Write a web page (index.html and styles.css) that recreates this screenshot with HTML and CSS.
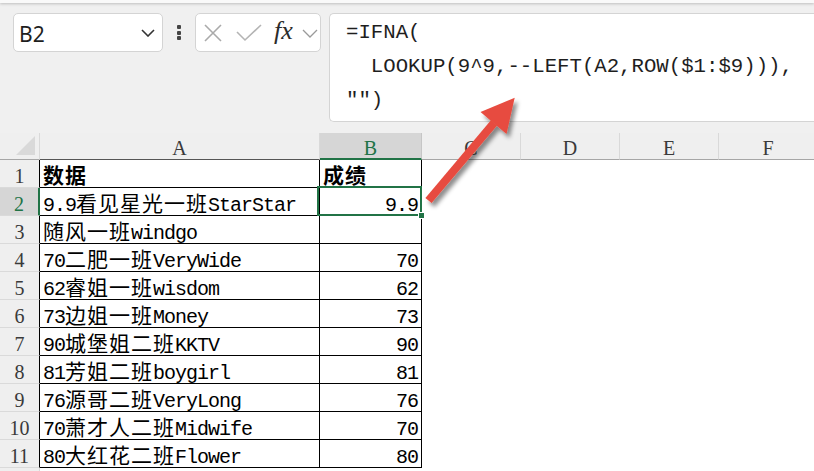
FILE: index.html
```html
<!DOCTYPE html>
<html lang="zh-CN">
<head>
<meta charset="utf-8">
<title>IFNA LOOKUP</title>
<link rel="stylesheet" href="styles.css">
</head>
<body>
<div class="ribbon"></div>
<div class="fbar">
  <div class="namebox">
    <span class="ref">B2</span>
    <svg class="nb-chev" width="14" height="8" viewBox="0 0 14 8"><path d="M1 1 L7 7 L13 1" fill="none" stroke="#333" stroke-width="1.6"/></svg>
  </div>
  <div class="dots"><i></i><i></i><i></i></div>
  <div class="fxbox">
    <svg class="ic-x" width="18" height="18" viewBox="0 0 18 18"><path d="M1 1 L17 17 M17 1 L1 17" fill="none" stroke="#aaaaaa" stroke-width="1.6"/></svg>
    <svg class="ic-ok" width="26" height="18" viewBox="0 0 26 18"><path d="M1 8 L9 16 L25 1" fill="none" stroke="#b4b4b4" stroke-width="1.6"/></svg>
    <span class="fx">fx</span>
    <svg class="fx-chev" width="16" height="9" viewBox="0 0 16 9"><path d="M1 1 L8 8 L15 1" fill="none" stroke="#9a9a9a" stroke-width="1.3"/></svg>
  </div>
  <div class="formula">=IFNA(
  LOOKUP(9^9,--LEFT(A2,ROW($1:$9))),
"")</div>
</div>

<div class="sheet">
  <div class="corner"><span class="tri"></span></div>
  <div class="ch hA">A</div>
  <div class="ch sel">B</div>
  <div class="ch">C</div>
  <div class="ch">D</div>
  <div class="ch">E</div>
  <div class="ch">F</div>

  <div class="rh">1</div>
  <div class="c hd">数据</div>
  <div class="c hd">成绩</div>
  <div class="e"></div><div class="e"></div><div class="e"></div><div class="e"></div>

  <div class="rh rsel">2</div>
  <div class="c"><span class="l">9.9</span>看见星光一班<span class="l">StarStar</span></div>
  <div class="c n active"><span class="l">9.9</span><span class="selbox"></span><span class="handle"></span></div>
  <div class="e"></div><div class="e"></div><div class="e"></div><div class="e"></div>

  <div class="rh">3</div>
  <div class="c">随风一班<span class="l">windgo</span></div>
  <div class="c n"></div>
  <div class="e"></div><div class="e"></div><div class="e"></div><div class="e"></div>

  <div class="rh">4</div>
  <div class="c"><span class="l">70</span>二肥一班<span class="l">VeryWide</span></div>
  <div class="c n"><span class="l">70</span></div>
  <div class="e"></div><div class="e"></div><div class="e"></div><div class="e"></div>

  <div class="rh">5</div>
  <div class="c"><span class="l">62</span>睿姐一班<span class="l">wisdom</span></div>
  <div class="c n"><span class="l">62</span></div>
  <div class="e"></div><div class="e"></div><div class="e"></div><div class="e"></div>

  <div class="rh">6</div>
  <div class="c"><span class="l">73</span>边姐一班<span class="l">Money</span></div>
  <div class="c n"><span class="l">73</span></div>
  <div class="e"></div><div class="e"></div><div class="e"></div><div class="e"></div>

  <div class="rh">7</div>
  <div class="c"><span class="l">90</span>城堡姐二班<span class="l">KKTV</span></div>
  <div class="c n"><span class="l">90</span></div>
  <div class="e"></div><div class="e"></div><div class="e"></div><div class="e"></div>

  <div class="rh">8</div>
  <div class="c"><span class="l">81</span>芳姐二班<span class="l">boygirl</span></div>
  <div class="c n"><span class="l">81</span></div>
  <div class="e"></div><div class="e"></div><div class="e"></div><div class="e"></div>

  <div class="rh">9</div>
  <div class="c"><span class="l">76</span>源哥二班<span class="l">VeryLong</span></div>
  <div class="c n"><span class="l">76</span></div>
  <div class="e"></div><div class="e"></div><div class="e"></div><div class="e"></div>

  <div class="rh">10</div>
  <div class="c"><span class="l">70</span>萧才人二班<span class="l">Midwife</span></div>
  <div class="c n"><span class="l">70</span></div>
  <div class="e"></div><div class="e"></div><div class="e"></div><div class="e"></div>

  <div class="rh">11</div>
  <div class="c"><span class="l">80</span>大红花二班<span class="l">Flower</span></div>
  <div class="c n"><span class="l">80</span></div>
  <div class="e"></div><div class="e"></div><div class="e"></div><div class="e"></div>

  <div class="rh rlast"></div>
  <div class="e"></div><div class="e"></div><div class="e"></div><div class="e"></div><div class="e"></div><div class="e"></div>
</div>

<svg class="arrow" width="140" height="140" viewBox="0 0 140 140">
  <defs>
    <filter id="sh" x="-30%" y="-30%" width="160%" height="160%">
      <feDropShadow dx="3" dy="4" stdDeviation="2.2" flood-color="#000" flood-opacity="0.45"/>
    </filter>
  </defs>
  <g filter="url(#sh)" fill="#e74c3f">
    <polygon points="15.4,112.9 21.6,118 87.1,40.4 80.9,35.2"/>
    <polygon points="70.5,27.1 104.7,12.7 96.5,48.9"/>
  </g>
</svg>
</body>
</html>
```

FILE: styles.css
```css
* { box-sizing: border-box; }

html, body {
  margin: 0;
  padding: 0;
  width: 814px;
  height: 471px;
  overflow: hidden;
}

body {
  background: #f0f0f0;
  font-family: "Noto Sans CJK SC", sans-serif;
  color: #000;
  position: relative;
}

.ribbon {
  height: 3px;
  background: #f9f9f9;
  box-shadow: 0 1px 3px rgba(0, 0, 0, 0.22);
}

.fbar {
  display: flex;
  align-items: flex-start;
  padding: 10px 0 0 13px;
  height: 130px;
}

.fbar > * { flex-shrink: 0; }

.namebox {
  width: 150px;
  height: 39px;
  background: #fff;
  border: 1px solid #d4d4d4;
  border-radius: 5px;
  display: flex;
  align-items: center;
  padding: 2px 7px 0 5px;
}

.ref {
  font-family: "Noto Sans", "Open Sans", sans-serif;
  font-size: 21px;
  color: #1e1e1e;
}

.nb-chev {
  margin-left: auto;
  margin-top: -1px;
}

.dots {
  width: 32px;
  height: 39px;
  display: flex;
  flex-direction: column;
  align-items: center;
  justify-content: center;
  gap: 1.5px;
}

.dots i {
  display: block;
  width: 4px;
  height: 4px;
  border-radius: 1px;
  background: #444;
}

.fxbox {
  width: 126px;
  height: 39px;
  background: #fff;
  border: 1px solid #d4d4d4;
  border-radius: 5px;
  display: flex;
  align-items: center;
  padding-left: 8px;
}

.ic-ok { margin-left: 14px; }

.fx {
  margin-left: 12px;
  font-family: "Liberation Serif", serif;
  font-style: italic;
  font-size: 26px;
  color: #2b2b2b;
  line-height: 1;
  margin-top: -4px;
  width: 25px;
}

.fx-chev { margin-left: 3px; margin-top: 1px; }

.formula {
  margin-left: 8px;
  width: 520px;
  height: 109px;
  background: #fff;
  border: 1px solid #d4d4d4;
  border-right: none;
  border-radius: 5px 0 0 5px;
  padding: 2px 0 0 16px;
  font-family: "Liberation Mono", monospace;
  font-size: 20.7px;
  line-height: 34px;
  color: #1e1e1e;
  white-space: pre;
}

.sheet {
  display: grid;
  grid-template-columns: 40px 280px 102px 99px 99px 99px 99px;
  grid-template-rows: 27px repeat(11, 28px) 4px;
  width: 818px;
  font-size: 21px;
}

.corner {
  background: #efefef;
  border-right: 1px solid #d9d9d9;
  border-bottom: 1px solid #a6a6a6;
  display: flex;
  justify-content: flex-end;
  align-items: flex-end;
  padding: 0 4px 4px 0;
}

.tri {
  display: block;
  width: 19px;
  height: 19px;
  background: #d9d9d9;
  clip-path: polygon(100% 0, 100% 100%, 0 100%);
}

.ch {
  background: #efefef;
  border-right: 1px solid #d9d9d9;
  border-bottom: 1px solid #a6a6a6;
  text-align: center;
  font-family: "Liberation Serif", serif;
  font-size: 20px;
  line-height: 21px;
  padding-top: 5px;
  color: #3a3a3a;
}

.ch.hA { border-bottom-color: #555; }

.ch.sel {
  background: #d6d6d6;
  color: #217346;
  border-bottom: 2px solid #217346;
  border-right-color: #c6c6c6;
}

.rh {
  background: #efefef;
  border-right: 1px solid #000;
  border-bottom: 1px solid #dadada;
  text-align: center;
  font-family: "Liberation Serif", serif;
  font-size: 20px;
  line-height: 21px;
  padding-top: 6px;
  color: #3a3a3a;
}

.rh.rsel {
  background: #d6d6d6;
  color: #217346;
  border-right: 2px solid #217346;
}

.rh.rlast { border-right-color: #d9d9d9; border-bottom: none; }

.c {
  background: #fff;
  border-right: 1px solid #000;
  border-bottom: 1px solid #000;
  padding: 1px 3px 0 3px;
  line-height: 26px;
  letter-spacing: 1px;
  white-space: nowrap;
}

.c.hd { font-weight: bold; }

.c.n { text-align: right; padding-right: 3px; }

.c.active { position: relative; }

.selbox {
  position: absolute;
  top: -2px;
  left: -3px;
  right: -1px;
  bottom: -1px;
  border: 2px solid #217346;
  pointer-events: none;
}

.handle {
  position: absolute;
  right: -4px;
  bottom: -4px;
  width: 7px;
  height: 7px;
  background: #217346;
  border: 1px solid #fff;
}

.l {
  font-family: "Liberation Mono", monospace;
  font-size: 20px;
  letter-spacing: -1px;
  line-height: 1;
}

.e { background: #fff; }

.arrow {
  position: absolute;
  left: 410px;
  top: 85px;
}
```
